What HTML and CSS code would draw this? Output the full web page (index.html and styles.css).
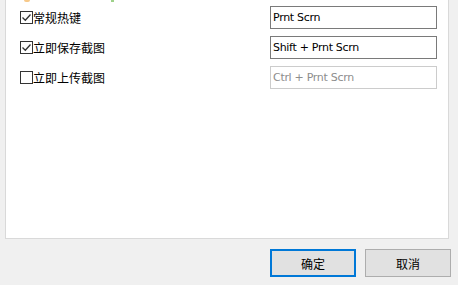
FILE: index.html
```html
<!DOCTYPE html>
<html>
<head>
<meta charset="utf-8">
<link rel="stylesheet" href="styles.css">
</head>
<body>
<div class="dialog">
  <div class="panel">
    <div class="peek">
      <span class="peek-orange"></span>
      <span class="peek-green"></span>
    </div>
    <div class="row">
      <label class="check">
        <span class="box checked"><svg width="11" height="11" viewBox="0 0 11 11"><path d="M1.5 5.5 L4.3 8.3 L9.5 2.5" fill="none" stroke="#333" stroke-width="1.3"/></svg></span>
        <span class="label">常规热键</span>
      </label>
      <div class="field">Prnt Scrn</div>
    </div>
    <div class="row">
      <label class="check">
        <span class="box checked"><svg width="11" height="11" viewBox="0 0 11 11"><path d="M1.5 5.5 L4.3 8.3 L9.5 2.5" fill="none" stroke="#333" stroke-width="1.3"/></svg></span>
        <span class="label">立即保存截图</span>
      </label>
      <div class="field">Shift + Prnt Scrn</div>
    </div>
    <div class="row">
      <label class="check">
        <span class="box"></span>
        <span class="label">立即上传截图</span>
      </label>
      <div class="field disabled">Ctrl + Prnt Scrn</div>
    </div>
  </div>
  <div class="buttons">
    <button class="btn primary">确定</button>
    <button class="btn">取消</button>
  </div>
</div>
</body>
</html>
```
FILE: styles.css
```css
html, body {
  margin: 0;
  padding: 0;
  background: #f0f0f0;
  width: 458px;
  height: 285px;
  overflow: hidden;
}
.dialog {
  padding: 0 9px 0 5px;
}
.panel {
  position: relative;
  background: #fff;
  border: 1px solid #d9d9d9;
  border-top: none;
  height: 239px;
  box-sizing: border-box;
  padding: 6px 11px 0 14px;
  display: flex;
  flex-direction: column;
  gap: 7px;
}
.peek {
  position: absolute;
  top: 0;
  left: 0;
  width: 100%;
  height: 3px;
}
.peek-orange {
  position: absolute;
  left: 18px;
  top: 0;
  width: 6px;
  height: 2px;
  background: #f7c98a;
  border-radius: 0 0 3px 3px;
}
.peek-green {
  position: absolute;
  left: 105px;
  top: 0;
  width: 3px;
  height: 2px;
  background: #9ed18a;
}
.row {
  display: flex;
  align-items: center;
  justify-content: space-between;
  height: 23px;
}
.check {
  display: flex;
  align-items: center;
  gap: 0;
}
.box {
  width: 13px;
  height: 13px;
  box-sizing: border-box;
  border: 1px solid #333;
  background: #fff;
  display: flex;
  align-items: center;
  justify-content: center;
}
.box svg { display: block; }
.label {
  font-family: "Noto Sans CJK SC", sans-serif;
  font-size: 12px;
  color: #000;
  line-height: 16px;
}
.field {
  width: 167px;
  height: 23px;
  box-sizing: border-box;
  border: 1px solid #7a7a7a;
  background: #fff;
  font-family: "DejaVu Sans", "Liberation Sans", sans-serif;
  font-size: 11px;
  letter-spacing: -0.3px;
  color: #000;
  padding: 0 2px;
  display: flex;
  align-items: center;
}
.field.disabled {
  border-color: #cccccc;
  color: #8d8d8d;
}
.buttons {
  display: flex;
  justify-content: flex-end;
  gap: 9px;
  margin-top: 10px;
  margin-right: -2px;
}
.btn {
  width: 86px;
  height: 28px;
  box-sizing: border-box;
  background: #e1e1e1;
  border: 1px solid #adadad;
  font-family: "Noto Sans CJK SC", sans-serif;
  font-size: 12px;
  color: #000;
  padding: 0;
  margin: 0;
}
.btn.primary {
  border: 2px solid #0078d7;
}
```
